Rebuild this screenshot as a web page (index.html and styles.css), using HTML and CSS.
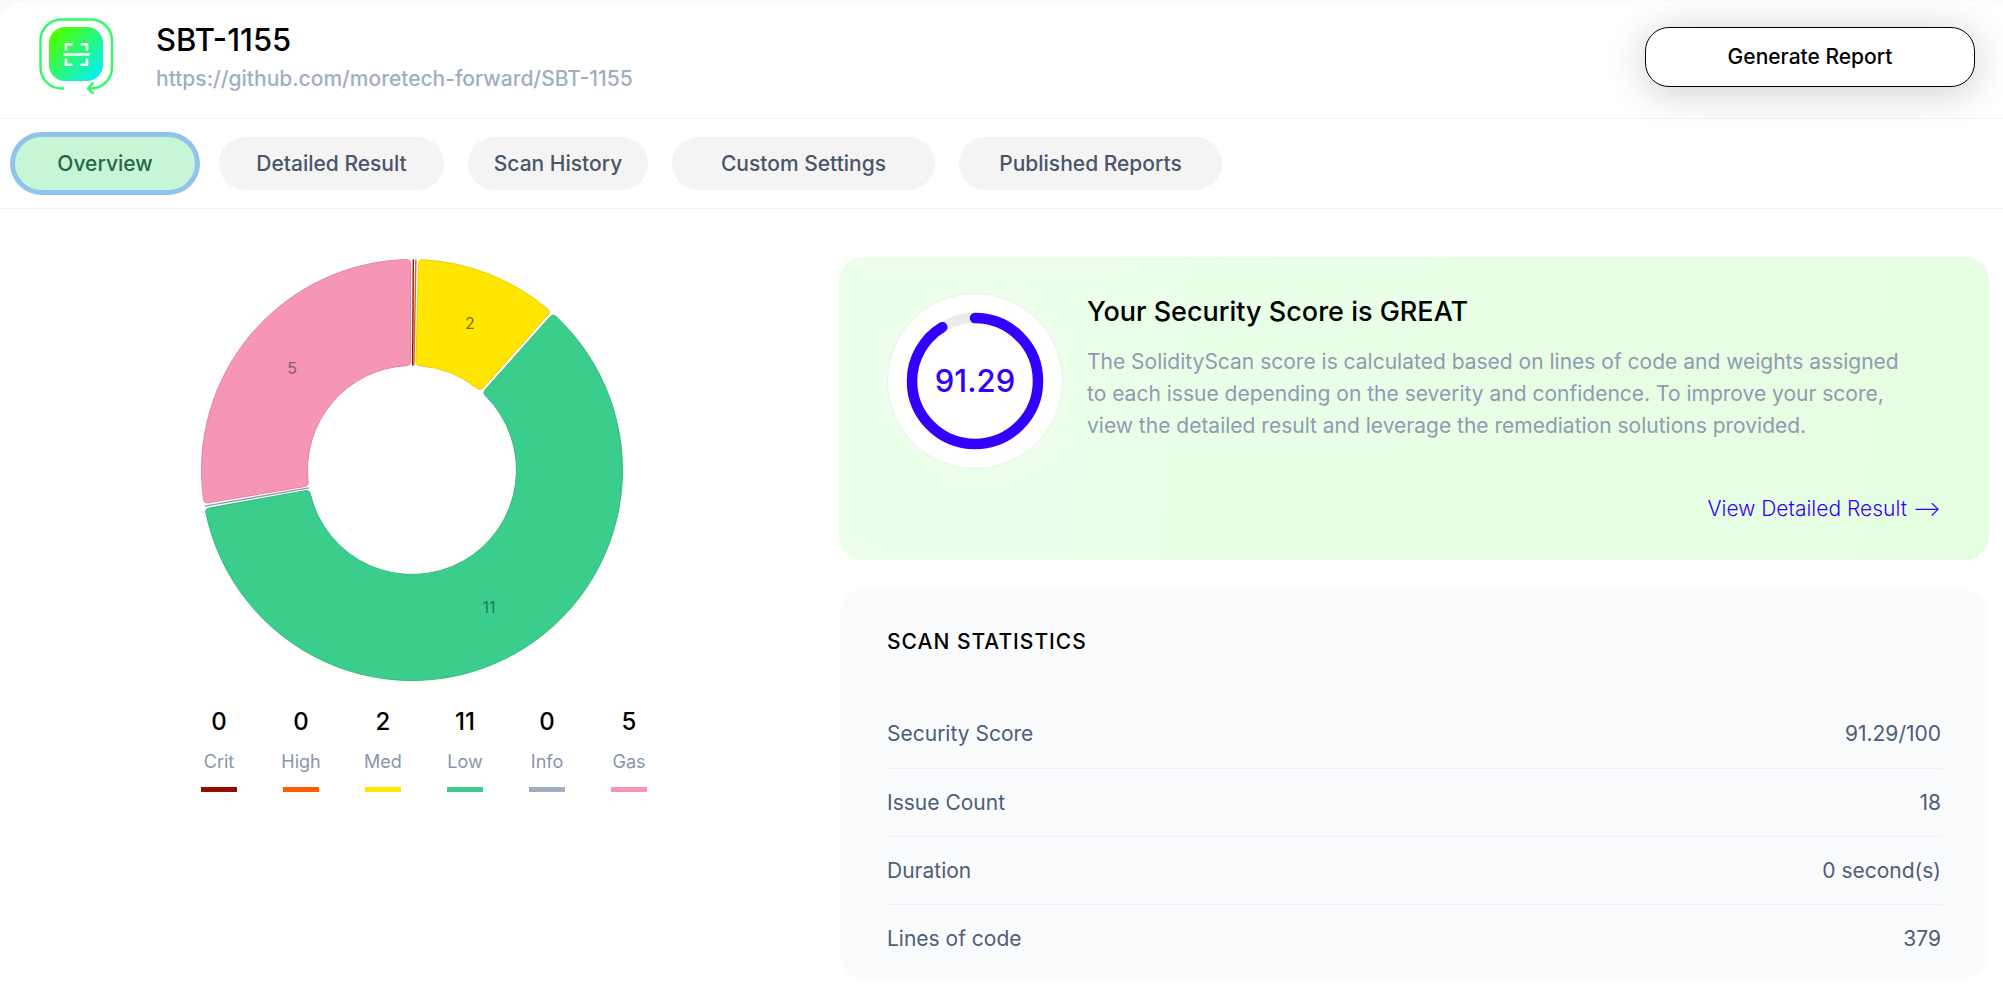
FILE: index.html
```html
<!DOCTYPE html>
<html lang="en">
<head>
<meta charset="utf-8">
<meta name="viewport" content="width=device-width, initial-scale=1">
<title>SBT-1155 – Scan overview</title>
<link rel="stylesheet" href="styles.css">
</head>
<body>
<div class="page">
  <header class="header">
    <svg class="logo" viewBox="0 0 76 78" aria-hidden="true">
      <defs>
        <linearGradient id="tile" x1="0" y1="0" x2="1" y2="1">
          <stop offset="0.1" stop-color="#4dff00"/>
          <stop offset="0.95" stop-color="#00eeff"/>
        </linearGradient>
      </defs>
      <path class="logo-frame" d="M26 72.5H23A21 21 0 0 1 2.500 51V24A21 21 0 0 1 23 3.500H53A21 21 0 0 1 74 24V51A21 21 0 0 1 53 72.500H50"/>
      <path class="logo-arrow" d="M55.500 66.500L50 72.500L55.500 78"/>
      <rect x="11" y="11" width="54" height="54" rx="16" fill="url(#tile)"/>
      <path class="logo-scan" d="M28 34.500V28.200H34.500M42.500 28.200H49V34.500M49 42.500V48.800H42.500M34.500 48.800H28V42.500M25.500 38.500H51.500"/>
    </svg>
    <div class="project">
      <h1 class="project-name">SBT-1155</h1>
      <a class="project-url" href="https://github.com/moretech-forward/SBT-1155">https://github.com/moretech-forward/SBT-1155</a>
    </div>
    <button class="report-button" type="button">Generate Report</button>
  </header>

  <nav class="tabs" aria-label="Scan sections">
    <button class="tab tab-small tab-active" type="button">Overview</button>
    <button class="tab tab-medium" type="button">Detailed Result</button>
    <button class="tab tab-small" type="button">Scan History</button>
    <button class="tab tab-large" type="button">Custom Settings</button>
    <button class="tab tab-large" type="button">Published Reports</button>
  </nav>

  <main class="content">
    <section class="chart" aria-label="Issues by severity">
      <svg class="donut" viewBox="-212 -212 424 424" role="img" aria-label="Issue distribution">
        <path class="slice slice-med" d="M6.480-206.400Q6.580-210.400 10.580-210.230A210.500 210.500 0 0 1 135.730-160.900Q138.770-158.290 136.110-155.300L71.010-82.050Q68.350-79.060 65.270-81.610A104.500 104.500 0 0 0 7.980-104.190Q3.990-104.430 4.090-108.430Z"/>
        <path class="slice slice-low" d="M138.250-153.400Q140.910-156.390 143.860-153.670A210.500 210.500 0 1 1-206.120 42.720Q-206.900 38.810-202.960 38.100L-106.520 20.690Q-102.590 19.980-101.730 23.880A104.500 104.500 0 1 0 73.390-74.390Q70.490-77.160 73.150-80.150Z"/>
        <path class="slice slice-gas" d="M-203.890 32.770Q-207.840 33.430-208.430 29.480A210.500 210.500 0 0 1-5.440-210.430Q-1.440-210.500-1.440-206.500V-108.500Q-1.440-104.500-5.430-104.360A104.500 104.500 0 0 0-103.820 11.920Q-103.300 15.880-107.240 16.540Z"/>
        <path class="empty-slice empty-crit" d="M1.290-210.500L0.640-104.500"/>
        <path class="empty-slice empty-high" d="M3.860-210.470L1.920-104.480"/>
        <path class="empty-slice empty-info" d="M-102.950 17.930L-207.380 36.120"/>
        <text class="slice-label label-med" x="58" y="-141">2</text>
        <text class="slice-label label-low" x="77" y="143">11</text>
        <text class="slice-label label-gas" x="-120" y="-96">5</text>
      </svg>
      <ul class="legend">
        <li class="legend-item crit"><span class="legend-count">0</span><span class="legend-name">Crit</span></li>
        <li class="legend-item high"><span class="legend-count">0</span><span class="legend-name">High</span></li>
        <li class="legend-item med"><span class="legend-count">2</span><span class="legend-name">Med</span></li>
        <li class="legend-item low"><span class="legend-count">11</span><span class="legend-name">Low</span></li>
        <li class="legend-item info"><span class="legend-count">0</span><span class="legend-name">Info</span></li>
        <li class="legend-item gas"><span class="legend-count">5</span><span class="legend-name">Gas</span></li>
      </ul>
    </section>

    <div class="panels">
      <section class="score-card">
        <div class="score-body">
          <svg class="gauge" viewBox="0 0 176 176" role="img" aria-label="Security score 91.29">
            <circle class="gauge-plate" cx="88" cy="88" r="87.500"/>
            <circle class="gauge-track" cx="88" cy="88" r="63"/>
            <circle class="gauge-value" cx="88" cy="88" r="63" pathLength="100" transform="rotate(-90 88 88)"/>
            <text class="gauge-text" x="88" y="99">91.29</text>
          </svg>
          <div class="score-copy">
            <h2 class="score-title">Your Security Score is GREAT</h2>
            <p class="score-text">The SolidityScan score is calculated based on lines of code and weights assigned to each issue depending on the severity and confidence. To improve your score, view the detailed result and leverage the remediation solutions provided.</p>
          </div>
        </div>
        <a class="score-link" href="#detailed-result">View Detailed Result ⟶</a>
      </section>

      <section class="stats">
        <h2 class="stats-title">SCAN STATISTICS</h2>
        <table class="stats-table">
          <tbody>
            <tr><th scope="row">Security Score</th><td>91.29/100</td></tr>
            <tr><th scope="row">Issue Count</th><td>18</td></tr>
            <tr><th scope="row">Duration</th><td>0 second(s)</td></tr>
            <tr><th scope="row">Lines of code</th><td>379</td></tr>
          </tbody>
        </table>
      </section>
    </div>
  </main>
</div>
</body>
</html>
```

FILE: styles.css
```css
* {
  box-sizing: border-box;
}

body {
  margin: 0;
  padding-top: 1px;
  background: #fafafb;
  color: #000;
  font-family: Inter, sans-serif;
  font-size: 21px;
}

h1, h2, p, ul {
  margin: 0;
  padding: 0;
  font-weight: 500;
}

button {
  font: inherit;
  font-weight: 500;
  cursor: pointer;
}

.page {
  min-height: calc(100vh - 1px);
  background: #fff;
  border-radius: 24px 0 0 0;
}

/* Header */

.header {
  display: flex;
  align-items: flex-start;
  padding: 15px 28px 24px 38px;
  border-bottom: 1px solid #f3f3f3;
}

.logo {
  width: 76px;
  height: 78px;
  margin-right: 42px;
  overflow: visible;
}

.logo-frame, .logo-arrow {
  fill: none;
  stroke: #2dfb68;
  stroke-width: 2.4;
}

.logo-scan {
  fill: none;
  stroke: #fff;
  stroke-width: 2.6;
}

.project {
  flex: 1;
  display: flex;
  flex-direction: column;
  align-items: flex-start;
  gap: 2px;
}

.project-name {
  font-size: 31px;
  line-height: 48px;
}

.project-url {
  color: #a0aec0;
  font-weight: 500;
  line-height: 26px;
  text-decoration: none;
}

.report-button {
  width: 330px;
  height: 60px;
  margin-top: 11px;
  padding: 0 0 2px;
  background: #fff;
  border: 1px solid #000;
  border-radius: 24px;
  color: #000;
  box-shadow: 0 5px 40px rgba(0, 0, 0, 0.2);
}

/* Tabs */

.tabs {
  display: flex;
  flex-wrap: wrap;
  gap: 24px;
  padding: 18px 15px;
  border-bottom: 1px solid #f3f3f3;
}

.tab {
  height: 53px;
  padding: 0;
  background: #f4f4f4;
  border: 0;
  border-radius: 27px;
  color: #4a5568;
}

.tab-small {
  width: 180px;
}

.tab-medium {
  width: 225px;
}

.tab-large {
  width: 263px;
}

.tab-active {
  background: #c6f6d5;
  color: #276749;
  box-shadow: 0 0 0 5px #90c3ee;
}

/* Content */

.content {
  display: grid;
  grid-template-columns: 412fr 575fr;
  gap: 15px;
  padding: 48px 14px 13px 0;
}

.chart {
  display: flex;
  flex-direction: column;
  align-items: center;
}

.donut {
  width: 424px;
  height: 424px;
  margin-top: 1px;
}

.slice {
  stroke-width: 1;
}

.slice-med {
  fill: #ffe600;
  stroke: #e6cf00;
}

.slice-low {
  fill: #3bcd8b;
  stroke: #35b97d;
}

.slice-gas {
  fill: #f795b4;
  stroke: #de86a2;
}

.empty-slice {
  fill: none;
  stroke-width: 1.400;
}

.empty-crit {
  stroke: #8a0d00;
}

.empty-high {
  stroke: #e65c0f;
}

.empty-info {
  stroke: #909cad;
}

.slice-label {
  font-size: 16px;
  text-anchor: middle;
}

.label-med {
  fill: #807300;
}

.label-low {
  fill: #237b53;
}

.label-gas {
  fill: #94596c;
}

.legend {
  display: flex;
  gap: 46px;
  margin-top: 22px;
  padding-left: 24px;
  list-style: none;
}

.legend-item {
  width: 36px;
  display: flex;
  flex-direction: column;
  align-items: center;
  border-bottom: 5px solid;
}

.legend-count {
  color: #000;
  font-size: 24px;
  font-weight: 500;
  line-height: 36px;
}

.legend-name {
  margin: 7px 0 10px;
  color: #8896ab;
  font-size: 18px;
  font-weight: 400;
  line-height: 30px;
}

.crit { border-color: #960d00; }
.high { border-color: #ff5c00; }
.med { border-color: #ffe600; }
.low { border-color: #3bcd8b; }
.info { border-color: #a0aec0; }
.gas { border-color: #f795b4; }

.panels {
  display: flex;
  flex-direction: column;
  gap: 30px;
}

.score-card {
  display: flex;
  flex-direction: column;
  padding: 36px 48px;
  border-radius: 24px;
  background: linear-gradient(96deg, #ecffeb, #e5fee1);
}

.score-body {
  display: flex;
  gap: 24px;
}

.gauge {
  flex: none;
  width: 176px;
  height: 176px;
}

.gauge-plate {
  fill: #fff;
  stroke: #eeeeee;
}

.gauge-track, .gauge-value {
  fill: none;
  stroke-width: 10.500;
}

.gauge-track {
  stroke: #ebebeb;
}

.gauge-value {
  stroke: #3300ff;
  stroke-linecap: round;
  stroke-dasharray: 91.290 100;
}

.gauge-text {
  fill: #3300ff;
  font-size: 31px;
  font-weight: 500;
  text-anchor: middle;
}

.score-title {
  font-size: 27px;
  line-height: 38px;
}

.score-text {
  max-width: 820px;
  margin-top: 15px;
  color: #8f9bb0;
  font-weight: 400;
  line-height: 32px;
}

.score-link {
  align-self: flex-end;
  margin-top: 24px;
  color: #3300ff;
  font-weight: 300;
  line-height: 31px;
  text-decoration: none;
}

.stats {
  padding: 37px 48px 6px;
  border-radius: 24px;
  background: #fafbfd;
}

.stats-title {
  font-size: 21px;
  letter-spacing: 1px;
  line-height: 30px;
}

.stats-table {
  width: 100%;
  margin-top: 43px;
  border-collapse: collapse;
  color: #4e5d78;
}

.stats-table th, .stats-table td {
  height: 68px;
  padding: 0;
  border-bottom: 1px solid #edf0f4;
  font-weight: 400;
  text-align: left;
}

.stats-table td {
  text-align: right;
}

.stats-table tr:last-child th, .stats-table tr:last-child td {
  border-bottom: 0;
}
```
